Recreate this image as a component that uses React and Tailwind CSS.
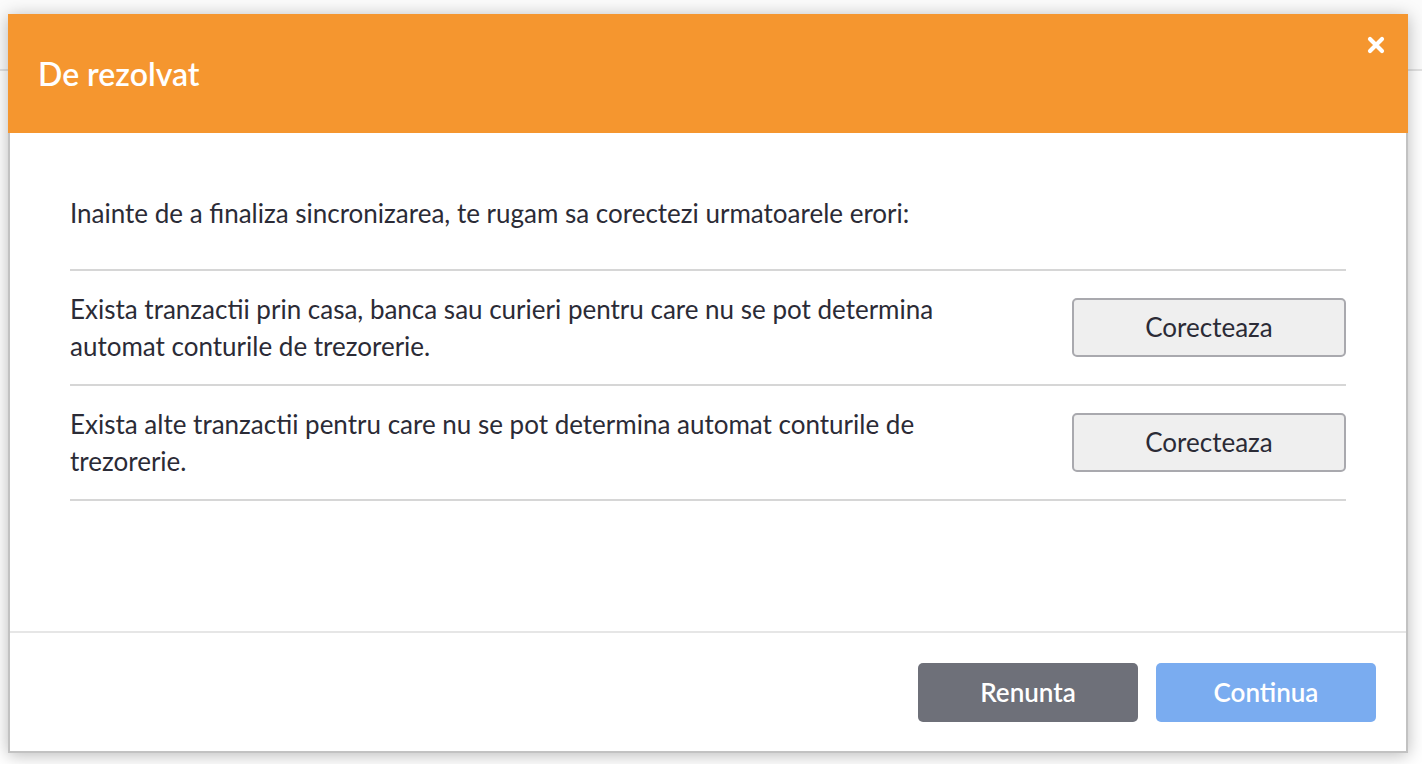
import React from "react";

function Row({ text }) {
  return (
    <div className="flex h-[115px] items-center justify-between border-b-2 border-[#d6d6d6]">
      <p className="max-w-[880px] text-[26px] leading-[37px] text-[#2b2b36]">{text}</p>
      <button className="h-[59px] w-[274px] shrink-0 rounded-[5px] border-2 border-[#a9a9ae] bg-[#efefef] text-[26px] text-[#2b2b36]">
        Corecteaza
      </button>
    </div>
  );
}

export default function App() {
  return (
    <div className="relative h-[764px] w-[1422px] overflow-hidden bg-white font-['Lato','Open_Sans',sans-serif]">
      <div className="h-[71px] border-b-2 border-[#e2e2e2] bg-[#fbfbfb]" />

      <div className="absolute left-[8px] top-[14px] flex h-[739px] w-[1400px] flex-col shadow-[0_2px_16px_rgba(0,0,0,0.28)]">
        <div className="relative flex h-[119px] shrink-0 items-center bg-[#F5962F] pl-[30px]">
          <h1 className="text-[32px] font-semibold text-white">De rezolvat</h1>
          <button className="absolute right-[22px] top-[21px] text-white" aria-label="close">
            <svg width="20" height="20" viewBox="0 0 20 20">
              <path d="M4 4 L16 16 M16 4 L4 16" stroke="white" strokeWidth="4.2" strokeLinecap="round" fill="none" />
            </svg>
          </button>
        </div>

        <div className="flex flex-1 flex-col border-x-2 border-b-2 border-[#c2c2c2] bg-white">
          <div className="flex-1 px-[60px]">
            <p className="pb-[39px] pt-[63px] text-[26px] leading-[34px] text-[#2b2b36]">
              Inainte de a finaliza sincronizarea, te rugam sa corectezi urmatoarele erori:
            </p>
            <div className="border-t-2 border-[#d6d6d6]">
              <Row text="Exista tranzactii prin casa, banca sau curieri pentru care nu se pot determina automat conturile de trezorerie." />
              <Row text="Exista alte tranzactii pentru care nu se pot determina automat conturile de trezorerie." />
            </div>
          </div>

          <div className="flex h-[120px] items-center justify-end gap-[18px] border-t-2 border-[#e6e6e6] pr-[30px]">
            <button className="h-[59px] w-[220px] rounded-[5px] bg-[#6e7079] text-[26px] font-semibold text-white">
              Renunta
            </button>
            <button className="h-[59px] w-[220px] rounded-[5px] bg-[#7aacf0] text-[26px] font-semibold text-white">
              Continua
            </button>
          </div>
        </div>
      </div>
    </div>
  );
}
